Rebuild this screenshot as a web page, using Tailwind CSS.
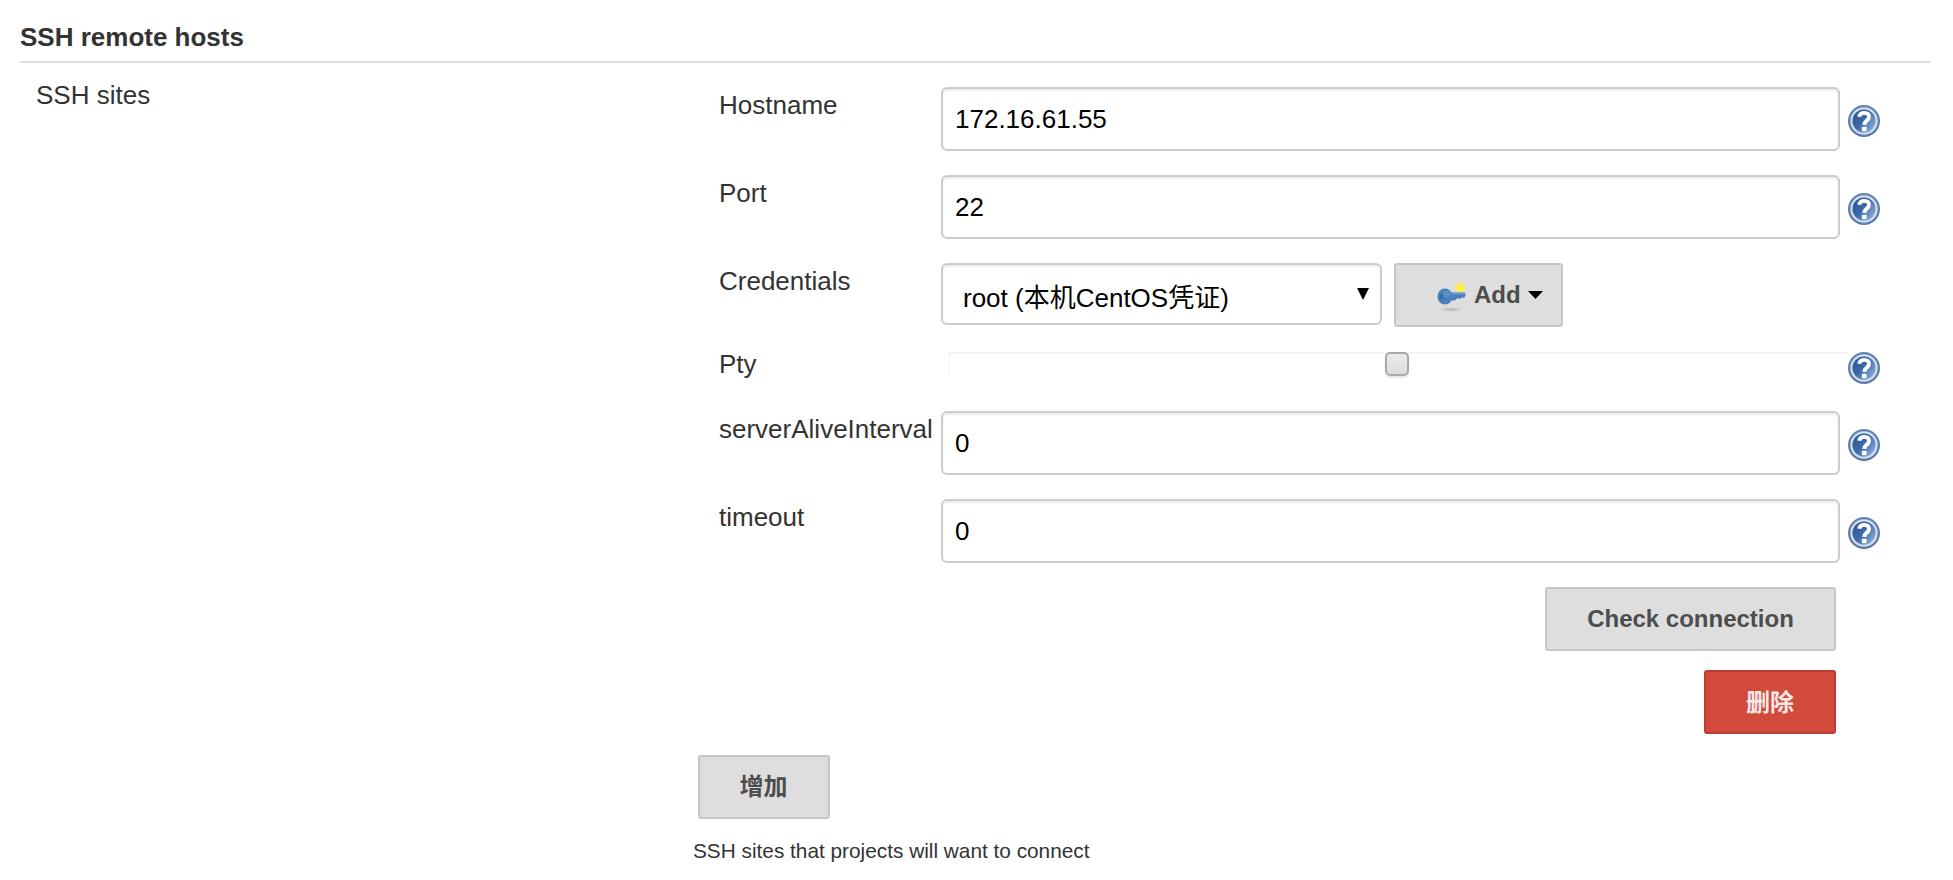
<!DOCTYPE html>
<html lang="zh-CN">
<head>
<meta charset="utf-8">
<title>SSH remote hosts</title>
<script src="https://cdn.jsdelivr.net/npm/@tailwindcss/browser@4"></script>
</head>
<body class="bg-white text-[#333] text-[26px] font-['Liberation_Sans','Noto_Sans_CJK_SC',sans-serif]">
<svg class="absolute size-0">
  <defs>
    <linearGradient id="blue" x1="0" y1="0.1" x2="1" y2="0.9">
      <stop offset="0" stop-color="#2c5593"/><stop offset=".45" stop-color="#3b68a6"/><stop offset="1" stop-color="#9dbde2"/>
    </linearGradient>
    <linearGradient id="rim" x1="0" y1="0" x2="0" y2="1">
      <stop offset="0" stop-color="#6583b0"/><stop offset="1" stop-color="#5878a9"/>
    </linearGradient>
    <radialGradient id="glow"><stop offset="0" stop-color="#fff23a"/><stop offset=".6" stop-color="#fbee52"/><stop offset="1" stop-color="#fbee52" stop-opacity="0"/></radialGradient>
    <radialGradient id="shade"><stop offset="0" stop-color="#b4b4b4"/><stop offset="1" stop-color="#b4b4b4" stop-opacity="0"/></radialGradient>
    <symbol id="help" viewBox="0 0 32 32">
      <circle cx="16" cy="16" r="16" fill="url(#rim)"/>
      <circle cx="16" cy="16" r="12.6" fill="url(#blue)" stroke="#d0deef" stroke-width="2.2"/>
      <path d="M11.2 11.8C11.600 8.500 13.800 7.900 16.300 7.900C19.200 7.900 21 9.500 21 12C21 15.500 16.500 15.600 16.300 19.800" fill="none" stroke="#fff" stroke-width="3.900"/>
      <rect x="13.900" y="21.800" width="4.700" height="4.400" rx=".8" fill="#fff"/>
    </symbol>
  </defs>
</svg>
<main class="w-[1953px] h-[880px] pt-[22px] pl-5 pr-[23px] overflow-hidden">
  <h1 class="h-[41px] border-b-2 border-[#ddd] font-bold leading-[30px]">SSH remote hosts</h1>
  <div class="flex">
    <div class="w-[673px] shrink-0 pl-4 pt-[17px] leading-[30px]">SSH sites</div>
    <div class="flex-1 pt-6">
      <div class="flex h-[88px]">
        <label class="w-[248px] pl-[26px] pt-1.5 leading-6">Hostname</label>
        <input value="172.16.61.55" class="w-[899px] h-16 border-2 border-[#ccc] rounded-[6px] px-3 text-black shadow-[inset_0_2px_2px_rgba(0,0,0,0.075)]">
        <svg class="size-8 ml-2 mt-[18px]"><use href="#help"/></svg>
      </div>
      <div class="flex h-[88px]">
        <label class="w-[248px] pl-[26px] pt-1.5 leading-6">Port</label>
        <input value="22" class="w-[899px] h-16 border-2 border-[#ccc] rounded-[6px] px-3 text-black shadow-[inset_0_2px_2px_rgba(0,0,0,0.075)]">
        <svg class="size-8 ml-2 mt-[18px]"><use href="#help"/></svg>
      </div>
      <div class="flex h-[89px]">
        <label class="w-[248px] pl-[26px] pt-1.5 leading-6">Credentials</label>
        <div class="flex justify-between w-[441px] h-[62px] border-2 border-[#ccc] rounded-[6px] pl-5 pr-[11px] text-black shadow-[inset_0_2px_2px_rgba(0,0,0,0.075)]">
          <span class="pt-[18px] leading-[30px] whitespace-nowrap">root (本机CentOS凭证)</span>
          <svg class="w-3 h-[12px] mt-[23px]" viewBox="0 0 12 12"><path d="M0 0H12L6 12Z"/></svg>
        </div>
        <button class="flex items-start w-[169px] h-16 ml-3 pl-[38px] border-2 border-[#c6c6c6] rounded-[3px] bg-[#dedede] text-[#4d4d4d] text-2xl font-bold">
          <svg class="w-8 h-8 mt-4 shrink-0" viewBox="0 0 32 32">
            <ellipse cx="17" cy="28.500" rx="12" ry="2.500" fill="url(#shade)"/>
            <circle cx="26" cy="7" r="6" fill="url(#glow)"/>
            <path d="M15 11.500H30.500Q32 12 31.500 14.500L30 17L28 16.200L26 18L23.500 17L21 19.500H15Z" fill="#4a82bd"/>
            <path d="M15 12.500H30.500" stroke="#6c9dd0" stroke-width="1.500"/>
            <ellipse cx="11" cy="15.500" rx="7.500" ry="8" fill="#4a80bb"/>
            <ellipse cx="13" cy="12.500" rx="4" ry="3.500" fill="#5c8ec5"/>
            <ellipse cx="7.300" cy="15.800" rx="1.800" ry="3" fill="#3b6ca5"/>
          </svg>
          <span class="ml-2 mt-[15px] leading-[30px]">Add</span>
          <svg class="w-[15px] h-2 ml-[7px] mt-[26px]" viewBox="0 0 15 8"><path d="M0 0H15L7.500 8Z" fill="#000"/></svg>
        </button>
      </div>
      <div class="flex h-[59px]">
        <label class="w-[256px] pl-[26px] leading-6">Pty</label>
        <div class="flex justify-center w-[899px] h-6 pr-[3px] shadow-[inset_1px_2px_1px_rgba(0,0,0,0.05)]">
          <span class="size-6 border-2 border-[#a9a9a9] rounded-[5px] bg-linear-to-b from-[#ececec] to-[#dcdcdc] shadow-[0_2px_2px_rgba(0,0,0,0.1)]"></span>
        </div>
        <svg class="size-8"><use href="#help"/></svg>
      </div>
      <div class="flex h-[88px]">
        <label class="w-[248px] pl-[26px] pt-1.5 leading-6">serverAliveInterval</label>
        <input value="0" class="w-[899px] h-16 border-2 border-[#ccc] rounded-[6px] px-3 text-black shadow-[inset_0_2px_2px_rgba(0,0,0,0.075)]">
        <svg class="size-8 ml-2 mt-[18px]"><use href="#help"/></svg>
      </div>
      <div class="flex h-[88px]">
        <label class="w-[248px] pl-[26px] pt-1.5 leading-6">timeout</label>
        <input value="0" class="w-[899px] h-16 border-2 border-[#ccc] rounded-[6px] px-3 text-black shadow-[inset_0_2px_2px_rgba(0,0,0,0.075)]">
        <svg class="size-8 ml-2 mt-[18px]"><use href="#help"/></svg>
      </div>
      <div class="flex flex-col items-end w-[1143px] gap-[19px] text-2xl font-bold">
        <button class="w-[291px] h-16 border-2 border-[#c6c6c6] rounded-[3px] bg-[#dedede] text-[#4d4d4d]">Check connection</button>
        <button class="w-[132px] h-16 pt-0.5 border-2 border-[#b93d33] rounded-[3px] bg-[#d14a3c] text-[#f5e9e8]">删除</button>
      </div>
      <button class="block w-[132px] h-16 ml-[5px] mt-[21px] pr-px border-2 border-[#c6c6c6] rounded-[3px] bg-[#dedede] text-[#4d4d4d] text-2xl font-bold">增加</button>
      <p class="mt-5 text-[20.8px] leading-6">SSH sites that projects will want to connect</p>
    </div>
  </div>
</main>
</body>
</html>
